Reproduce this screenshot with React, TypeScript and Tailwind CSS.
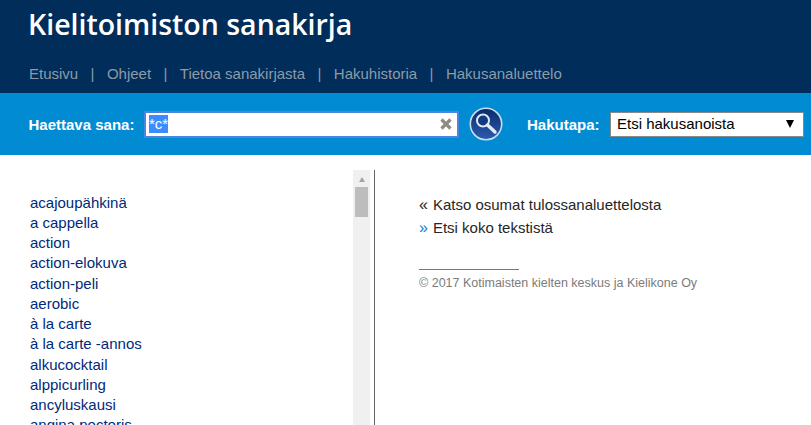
const words = ["acajoupähkinä","a cappella","action","action-elokuva","action-peli","aerobic","à la carte","à la carte -annos","alkucocktail","alppicurling","ancyluskausi","angina pectoris"];
const nav = ["Etusivu","Ohjeet","Tietoa sanakirjasta","Hakuhistoria","Hakusanaluettelo"];

export default function App() {
  return (
    <div className="h-[425px] w-[811px] overflow-hidden bg-white font-['Liberation_Sans',Arial,sans-serif]">
      <header className="h-[93px] bg-[#002d5a] pl-[28px] pt-[5px]">
        <h1 className="font-['Open_Sans',sans-serif] text-[28.5px] leading-[38px] font-semibold text-white">Kielitoimiston sanakirja</h1>
        <nav className="mt-[21px] flex pl-[1px] text-[15px] leading-[20px] text-[#8c9ba8]">
          {nav.map((n, i) => (
            <span key={n} className="flex">
              {i > 0 && <span className="mx-[12.4px]">|</span>}
              <span>{n}</span>
            </span>
          ))}
        </nav>
      </header>
      <div className="flex h-[62px] items-center bg-[#008bd2] pl-[28.5px]">
        <label className="w-[115.5px] pt-[2px] text-[15px] font-bold text-white">Haettava sana:</label>
        <div className="flex h-[27px] w-[315px] items-center justify-between border-2 border-[#4a86e0] bg-white pl-[3px] pr-[4px]">
          <span className="bg-[#3b8cff] text-[15px] leading-[18px] text-white">*c*</span>
          <svg width="14" height="14" viewBox="0 0 14 14"><path d="M2.5 2.5L11.5 11.5M11.5 2.5L2.5 11.5" stroke="#8e8a84" strokeWidth="3.2" /></svg>
        </div>
        <svg className="ml-[10px]" width="34" height="34" viewBox="0 0 34 34">
          <defs>
            <linearGradient id="g" x1="0" y1="0" x2="0" y2="1"><stop offset="0" stopColor="#0a2a6a" /><stop offset="1" stopColor="#2d5cb0" /></linearGradient>
          </defs>
          <circle cx="17" cy="17" r="15.7" fill="url(#g)" stroke="#c9dff0" strokeWidth="1.6" />
          <circle cx="14" cy="13.5" r="6" fill="#123a80" stroke="#dfe8f4" strokeWidth="2" />
          <path d="M18.5 18L26 25" stroke="#e6ebf2" strokeWidth="3.4" strokeLinecap="round" />
        </svg>
        <label className="ml-[24px] w-[83px] pt-[2px] text-[15px] font-bold text-white">Hakutapa:</label>
        <div className="flex h-[25px] w-[194px] items-center justify-between border border-[#8a8a8a] bg-white pl-[6px] pr-[9px] text-[15px] text-black">
          <span>Etsi hakusanoista</span>
          <span className="h-0 w-0 border-x-[4px] border-t-[8px] border-x-transparent border-t-black" />
        </div>
      </div>
      <main className="flex pt-[15px]">
        <div className="flex h-[255px] w-[353px] flex-col pl-[30px] pt-[22.5px] text-[15px] leading-[20.27px] text-[#002a7a]">
          {words.map((w) => <a key={w} className="whitespace-nowrap">{w}</a>)}
        </div>
        <div className="flex h-[255px] w-[17px] flex-col items-center bg-[#f0f0f0] pt-[7px]">
          <span className="h-0 w-0 border-x-[3.5px] border-b-[5px] border-x-transparent border-b-[#a3a3a3]" />
          <span className="mt-[5px] h-[30px] w-[13px] bg-[#bdbdbd]" />
        </div>
        <div className="ml-[4px] h-[255px] w-[1px] bg-[#666666]" />
        <section className="pl-[44px] pt-[23px] text-[15px] leading-[23px] text-[#262626]">
          <p><span className="mr-[5px] text-[16px]">«</span>Katso osumat tulossanaluettelosta</p>
          <p><span className="mr-[5px] text-[16px] text-[#008bd2]">»</span>Etsi koko tekstistä</p>
          <div className="mt-[30px] h-[1px] w-[100px] bg-[#777777]" />
          <p className="mt-[4px] text-[12.5px] leading-[18px] text-[#7b7b7b]">© 2017 Kotimaisten kielten keskus ja Kielikone Oy</p>
        </section>
      </main>
    </div>
  );
}
